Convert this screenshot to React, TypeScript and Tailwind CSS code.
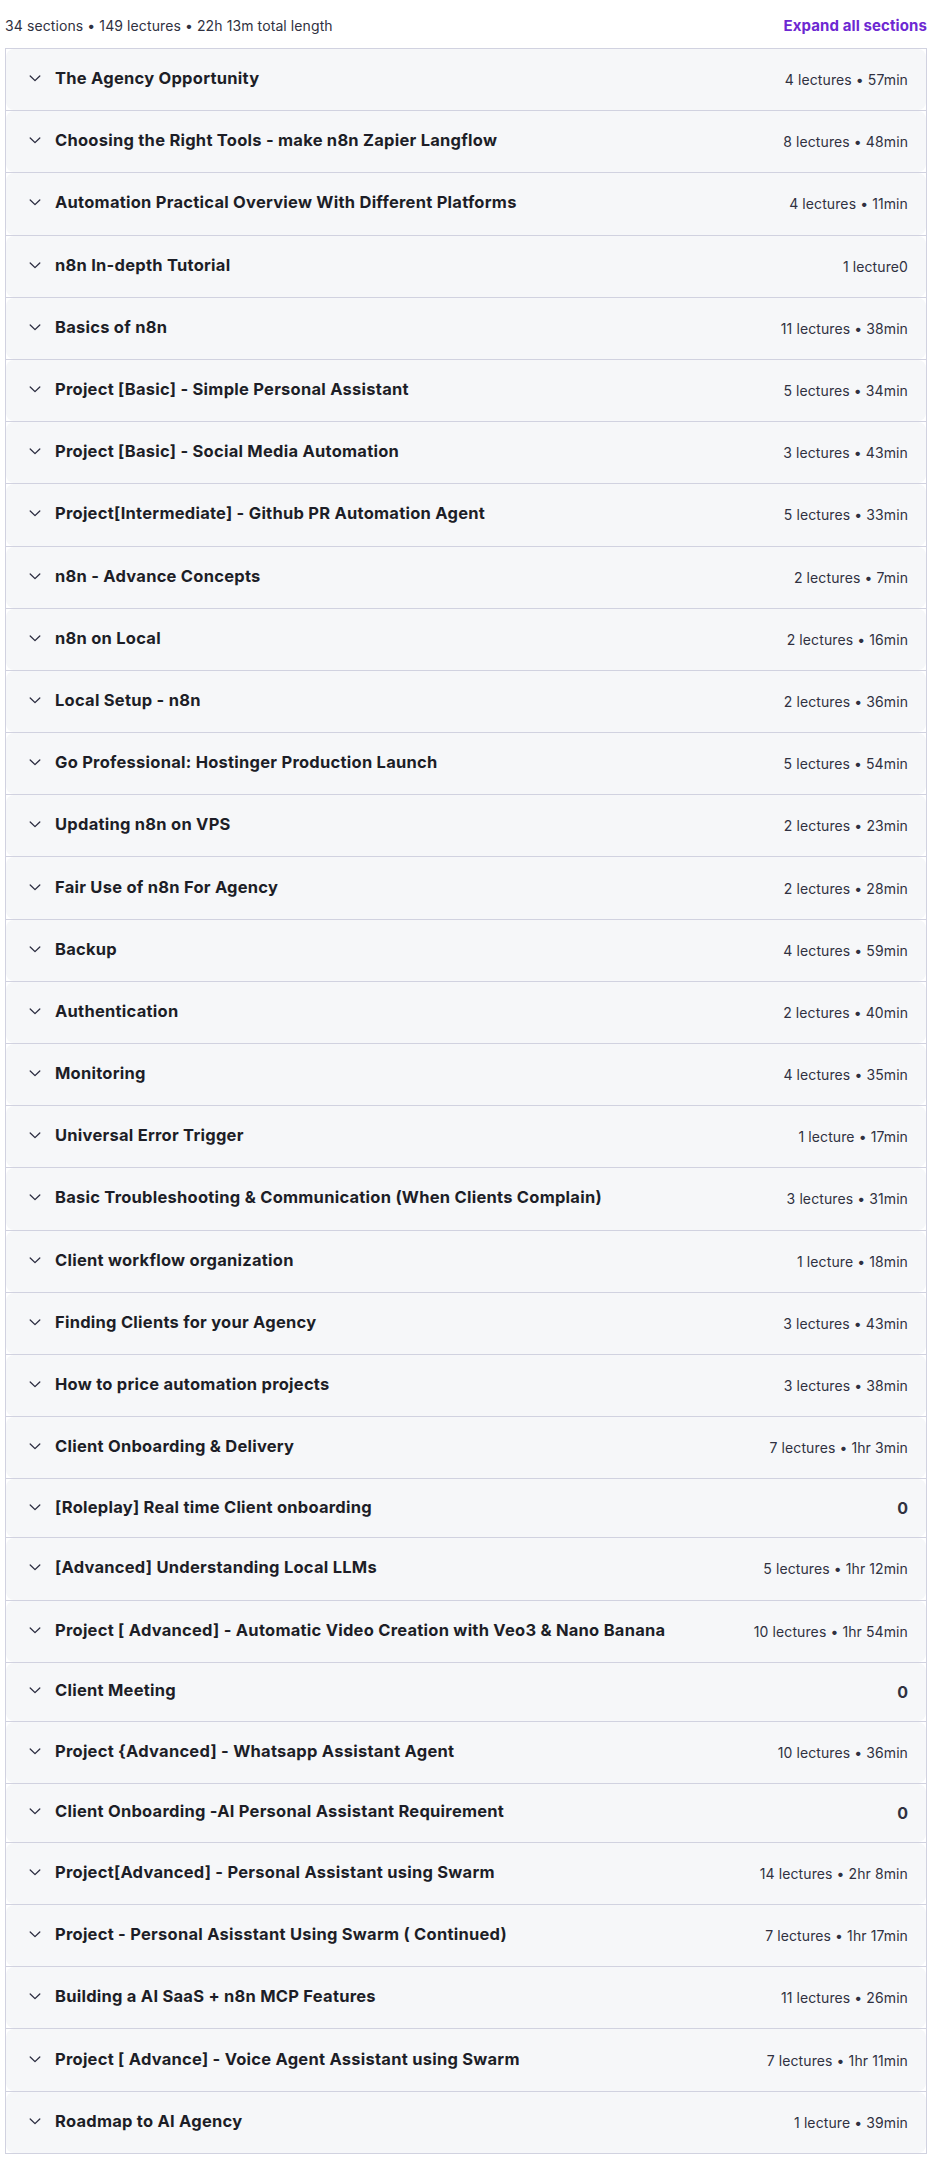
import React from "react";

type Section = { title: string; meta: string; empty?: boolean };

const sections: Section[] = [
  { title: "The Agency Opportunity", meta: "4 lectures • 57min" },
  { title: "Choosing the Right Tools - make n8n Zapier Langflow", meta: "8 lectures • 48min" },
  { title: "Automation Practical Overview With Different Platforms", meta: "4 lectures • 11min" },
  { title: "n8n In-depth Tutorial", meta: "1 lecture0" },
  { title: "Basics of n8n", meta: "11 lectures • 38min" },
  { title: "Project [Basic] - Simple Personal Assistant", meta: "5 lectures • 34min" },
  { title: "Project [Basic] - Social Media Automation", meta: "3 lectures • 43min" },
  { title: "Project[Intermediate] - Github PR Automation Agent", meta: "5 lectures • 33min" },
  { title: "n8n - Advance Concepts", meta: "2 lectures • 7min" },
  { title: "n8n on Local", meta: "2 lectures • 16min" },
  { title: "Local Setup - n8n", meta: "2 lectures • 36min" },
  { title: "Go Professional: Hostinger Production Launch", meta: "5 lectures • 54min" },
  { title: "Updating n8n on VPS", meta: "2 lectures • 23min" },
  { title: "Fair Use of n8n For Agency", meta: "2 lectures • 28min" },
  { title: "Backup", meta: "4 lectures • 59min" },
  { title: "Authentication", meta: "2 lectures • 40min" },
  { title: "Monitoring", meta: "4 lectures • 35min" },
  { title: "Universal Error Trigger", meta: "1 lecture • 17min" },
  { title: "Basic Troubleshooting & Communication (When Clients Complain)", meta: "3 lectures • 31min" },
  { title: "Client workflow organization", meta: "1 lecture • 18min" },
  { title: "Finding Clients for your Agency", meta: "3 lectures • 43min" },
  { title: "How to price automation projects", meta: "3 lectures • 38min" },
  { title: "Client Onboarding & Delivery", meta: "7 lectures • 1hr 3min" },
  { title: "[Roleplay] Real time Client onboarding", meta: "0", empty: true },
  { title: "[Advanced] Understanding Local LLMs", meta: "5 lectures • 1hr 12min" },
  { title: "Project [ Advanced] - Automatic Video Creation with Veo3 & Nano Banana", meta: "10 lectures • 1hr 54min" },
  { title: "Client Meeting", meta: "0", empty: true },
  { title: "Project {Advanced] - Whatsapp Assistant Agent", meta: "10 lectures • 36min" },
  { title: "Client Onboarding -AI Personal Assistant Requirement", meta: "0", empty: true },
  { title: "Project[Advanced] - Personal Assistant using Swarm", meta: "14 lectures • 2hr 8min" },
  { title: "Project - Personal Asisstant Using Swarm ( Continued)", meta: "7 lectures • 1hr 17min" },
  { title: "Building a AI SaaS + n8n MCP Features", meta: "11 lectures • 26min" },
  { title: "Project [ Advance] - Voice Agent Assistant using Swarm", meta: "7 lectures • 1hr 11min" },
  { title: "Roadmap to AI Agency", meta: "1 lecture • 39min" },
];

function Chevron() {
  return (
    <svg width="16" height="16" viewBox="0 0 16 16" fill="none" className="shrink-0">
      <path d="M3.2 6 L8 10.6 L12.8 6" stroke="#2a2b3f" strokeWidth="1.3" strokeLinecap="round" strokeLinejoin="round" />
    </svg>
  );
}

function SectionRow({ s, last }: { s: Section; last: boolean }) {
  return (
    <div className={last ? "" : "border-b border-[#d1d2e0]"}>
      <div
        className={`flex items-center justify-between rounded-lg bg-[#f6f7f9] pl-[21px] pr-[18px] ${
          s.empty ? "h-[58px]" : "h-[61.2px]"
        }`}
      >
        <div className="flex items-center gap-3 min-w-0 mb-[3px]">
          <Chevron />
          <span className="text-[16.5px] font-bold leading-[20px] text-[#1d1e27] whitespace-nowrap tracking-[0.25px]">
            {s.title}
          </span>
        </div>
        <span
          className={`whitespace-nowrap text-[#303141] ${
            s.empty ? "text-[16px] font-bold" : "text-[14px] font-normal tracking-[0.1px]"
          }`}
        >
          {s.meta}
        </span>
      </div>
    </div>
  );
}

export default function App() {
  return (
    <div className="bg-white pl-[5px] pr-[6px] pb-[8px]" style={{ fontFamily: "Inter, 'Liberation Sans', sans-serif" }}>
      <div className="flex items-center justify-between pt-[15px] pb-[12px] leading-[21px]">
        <span className="text-[14px] text-[#303141] tracking-[0.1px]">
          34 sections • 149 lectures • 22h 13m total length
        </span>
        <button className="text-[15px] font-bold text-[#6d28d2] tracking-[0.1px]">Expand all sections</button>
      </div>
      <div className="border border-[#d1d2e0] bg-white">
        {sections.map((s, i) => (
          <SectionRow key={i} s={s} last={i === sections.length - 1} />
        ))}
      </div>
    </div>
  );
}
